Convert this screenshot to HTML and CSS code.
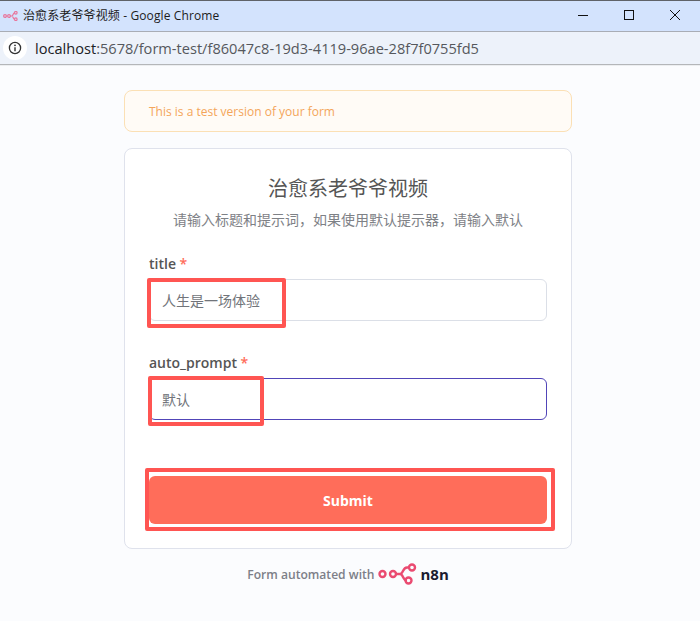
FILE: index.html
```html
<!DOCTYPE html>
<html lang="zh">
<head>
<meta charset="utf-8">
<title>治愈系老爷爷视频</title>
<link rel="stylesheet" href="styles.css">
</head>
<body>
<div class="window">
  <header class="titlebar">
    <svg class="favicon" width="15" height="10" viewBox="0 0 15 10" fill="none" stroke="#e8759c" stroke-width="1.2">
      <circle cx="2" cy="5" r="1.4"/><circle cx="6" cy="5" r="1.4"/><path d="M7.4 5H9c1.2 0 1-3.2 2.6-3.2M9 5c1.2 0 1 3.2 2.6 3.2"/><circle cx="12.8" cy="1.8" r="1.3"/><circle cx="12.8" cy="8.2" r="1.3"/>
    </svg>
    <span class="window-title">治愈系老爷爷视频 - Google Chrome</span>
    <div class="controls">
      <svg width="12" height="12" viewBox="0 0 12 12"><path d="M1 6.5h10" stroke="#111" fill="none"/></svg>
      <svg width="12" height="12" viewBox="0 0 12 12"><rect x="1.5" y="1.5" width="9" height="9" stroke="#111" fill="none"/></svg>
      <svg width="12" height="12" viewBox="0 0 12 12"><path d="M1 1l10 10M11 1L1 11" stroke="#111" fill="none"/></svg>
    </div>
  </header>
  <div class="addressbar">
    <span class="info-chip">
      <svg width="14" height="14" viewBox="0 0 14 14" fill="none"><circle cx="7" cy="7" r="5.6" stroke="#333" stroke-width="1.3"/><path d="M7 6.2v4" stroke="#333" stroke-width="1.4"/><circle cx="7" cy="4.3" r=".9" fill="#333"/></svg>
    </span>
    <span class="url"><span class="url-host">localhost</span>:5678/form-test/f86047c8-19d3-4119-96ae-28f7f0755fd5</span>
  </div>
  <main class="page">
    <div class="column">
      <div class="banner">This is a test version of your form</div>
      <form class="card">
        <h1 class="form-title">治愈系老爷爷视频</h1>
        <p class="form-desc">请输入标题和提示词，如果使用默认提示器，请输入默认</p>
        <div class="field field-first">
          <label class="label">title <span class="req">*</span></label>
          <div class="input">人生是一场体验<span class="mark mark-title"></span></div>
        </div>
        <div class="field field-second">
          <label class="label">auto_prompt <span class="req">*</span></label>
          <div class="input input-focus">默认<span class="mark mark-prompt"></span></div>
        </div>
        <div class="submit">Submit<span class="mark mark-submit"></span></div>
      </form>
      <footer class="footer">
        <span>Form automated with</span>
        <svg class="logo" width="39" height="22" viewBox="0 0 39 22" fill="none" stroke="#ea4b71" stroke-width="2.4">
          <circle cx="4.5" cy="11" r="3"/><circle cx="15" cy="11" r="3"/><path d="M18 11h4c3.5 0 2.5-6.5 7-6.500h1M22 11c3.500 0 2.500 6.500 7 6.500h-1"/><circle cx="34" cy="4.500" r="3"/><circle cx="30.500" cy="17.500" r="3"/>
        </svg>
        <span class="brand">n8n</span>
      </footer>
    </div>
  </main>
</div>
</body>
</html>
```
FILE: styles.css
```css
* { box-sizing: border-box; }
html, body { margin: 0; height: 100%; }
body { font-family: "Open Sans", "Noto Sans CJK SC", sans-serif; overflow: hidden; }
.window { width: 700px; height: 621px; display: flex; flex-direction: column; background: #fbfcfe; }
.titlebar { height: 32px; flex: none; background: #d3e3fd; border-top: 1px solid #5f6368; border-bottom: 1px solid #a9adb5; display: flex; align-items: center; padding-left: 3px; }
.favicon { flex: none; margin-bottom: 1px; }
.window-title { margin-left: 5px; margin-bottom: 2px; font-size: 12px; letter-spacing: 0.12px; color: #1c1c1c; }
.controls { margin-left: auto; display: flex; gap: 34px; padding-right: 19px; margin-bottom: 2px; }
.addressbar { height: 33px; flex: none; background: #edf2fa; border-bottom: 1px solid #b4b6b9; display: flex; align-items: center; padding-left: 3px; }
.info-chip { width: 24px; height: 24px; border-radius: 50%; background: #fff; display: flex; align-items: center; justify-content: center; }
.url { margin-left: 8px; font-size: 14.6px; color: #55585d; }
.url-host { color: #202124; }
.page { flex: 1; display: flex; justify-content: center; padding: 24px 4px 0 0; border-top: 1px solid #eceef0; }
.column { width: 448px; }
.banner { height: 42px; border: 1px solid #fbe0b5; border-radius: 8px; background: #fffbf6; color: #f4a55a; font-size: 12px; display: flex; align-items: center; padding-left: 24px; }
.card { margin-top: 16px; height: 401px; background: #fff; border: 1px solid #dfe2ec; border-radius: 8px; padding: 26px 24px 0; }
.form-title { margin: 0; font-size: 20px; font-weight: 400; line-height: 28px; text-align: center; color: #555; }
.form-desc { margin: 7px 0 0; font-size: 14px; line-height: 20px; text-align: center; color: #7e8186; }
.field-first { margin-top: 24px; }
.field-second { margin-top: 32px; }
.label { display: block; font-size: 14px; font-weight: 600; line-height: 20px; color: #555; margin-bottom: 5px; }
.req { color: #ff6d5a; }
.input { position: relative; height: 42px; border: 1px solid #dbdfe7; border-radius: 6px; background: #fff; padding-left: 12px; display: flex; align-items: center; font-size: 14px; color: #71747a; }
.input-focus { border-color: #5145b8; }
.submit { position: relative; margin-top: 56px; height: 48px; border-radius: 6px; background: #ff6d5a; color: #fff; font-size: 14px; font-weight: 700; display: flex; align-items: center; justify-content: center; }
.mark { position: absolute; border: 4px solid #ff5552; border-radius: 2px; pointer-events: none; }
.mark-title { left: -3px; top: -2px; width: 139px; height: 50px; }
.mark-prompt { left: -2px; top: -3px; width: 116px; height: 50px; }
.mark-submit { left: -4px; top: -8px; width: 410px; height: 63px; }
.footer { display: flex; align-items: center; justify-content: center; margin-top: 14px; font-size: 12.1px; font-weight: 600; color: #7d7f88; }
.logo { margin-left: 4px; }
.brand { margin-left: 3px; font-size: 15px; font-weight: 700; color: #1b1b2f; }
```
